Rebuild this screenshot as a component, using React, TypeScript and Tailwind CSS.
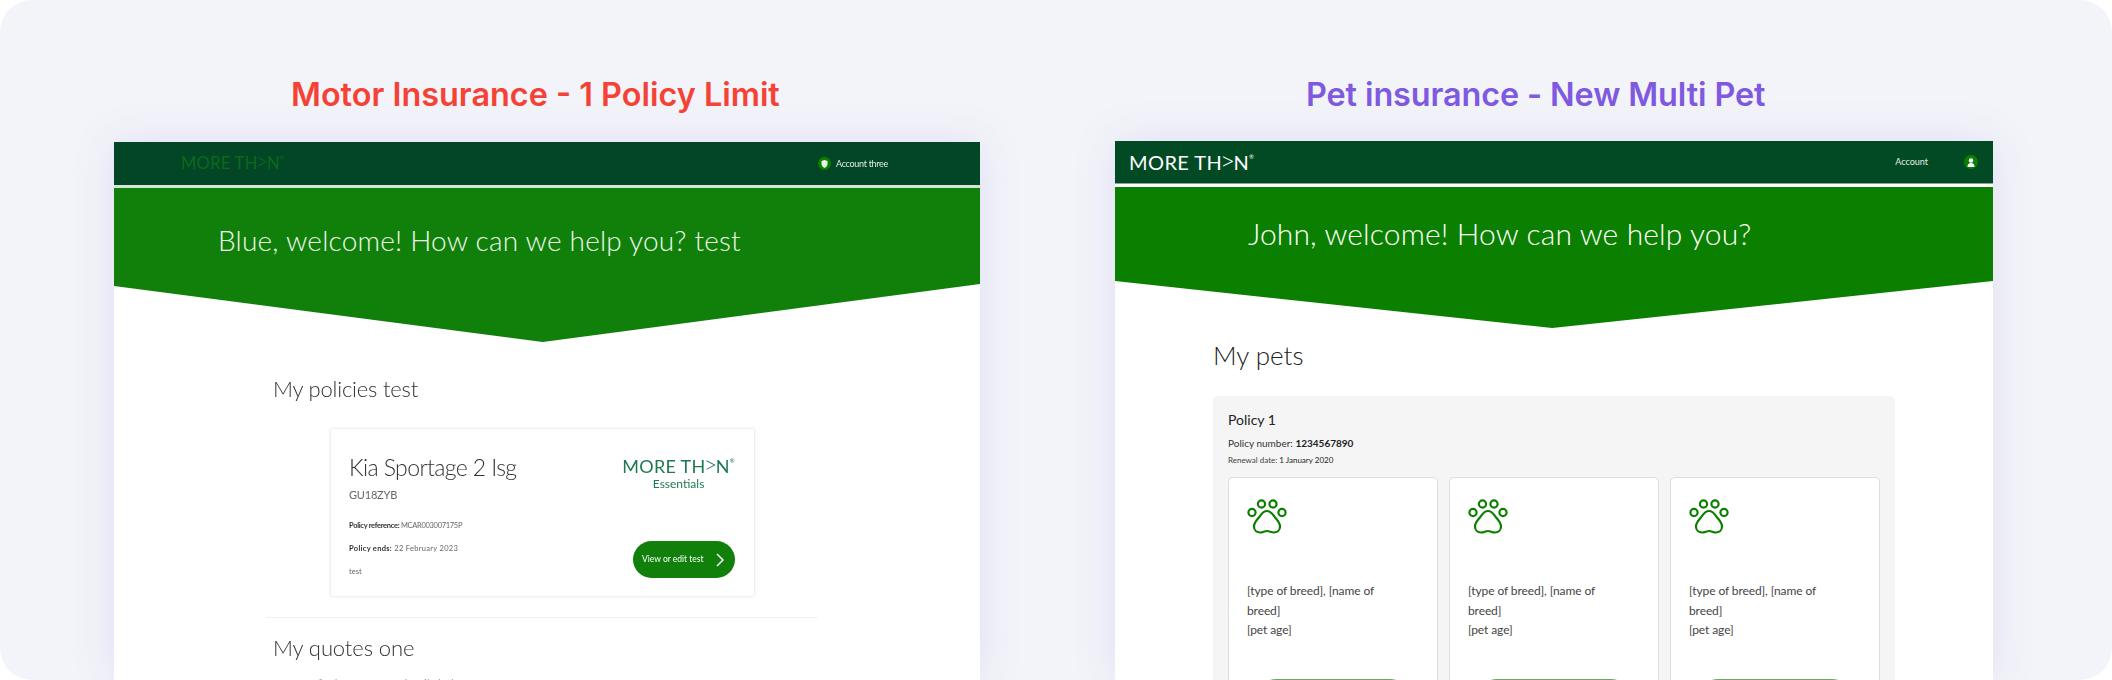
function Logo({ className }: { className: string }) {
  return (
    <span className={`inline-block whitespace-nowrap font-['Lato',sans-serif] font-normal ${className}`}>
      MORE TH<span className="text-[1.3em] leading-[0] font-light mx-[-0.08em]">&gt;</span>N
      <sup className="text-[6px] align-super">®</sup>
    </span>
  )
}

function PawIcon() {
  return (
    <svg width="40" height="35" viewBox="0 0 40 35" fill="none" stroke="#0b8000" strokeWidth="2.2">
      <circle cx="14.500" cy="5" r="3.600" />
      <circle cx="26" cy="5" r="3.600" />
      <circle cx="5" cy="13.500" r="3.600" />
      <circle cx="35" cy="13.500" r="3.600" />
      <path d="M20 12C15.500 12 14 16 11.500 19C9 22 7 24 7 27.500C7 31.500 10 33.500 13 33.500C16 33.500 17.500 32 20 32C22.500 32 24 33.500 27 33.500C30 33.500 33 31.500 33 27.500C33 24 31 22 28.500 19C26 16 24.500 12 20 12Z" />
    </svg>
  )
}

function PetCard() {
  return (
    <div className="flex-1 h-[300px] bg-white border border-[#dedede] rounded-[5px] pt-[21px] px-[18px]">
      <PawIcon />
      <p className="mt-[47px] text-[12px] leading-[19.700px] text-[#444] w-[130px] tracking-[-0.1px]">
        [type of breed], [name of breed]
        <br />
        [pet age]
      </p>
      <div className="mt-[39px] mx-[9px] h-[40px] rounded-[20px] bg-[#6aa864]" />
    </div>
  )
}

function MotorScreen() {
  return (
    <div className="w-[866px] h-[538px] bg-white overflow-hidden blur-[0.35px] shadow-[0_0_40px_rgba(120,120,220,0.16)]">
      {/* nav */}
      <div className="h-[43px] bg-[#024626] flex items-center pl-[67px] pr-[92px] justify-between">
        <Logo className="text-[16.500px] tracking-[0.3px] text-[#0c6a1a]" />
        <div className="flex items-center gap-[5px]">
          <span className="w-[13px] h-[13px] rounded-full bg-[#0b8000] flex items-center justify-center">
            <svg width="7" height="8" viewBox="0 0 7 8" fill="#e9f5e4"><path d="M0.500 1L3.500 0L6.500 1V4C6.500 6 5 7.300 3.500 8C2 7.300 0.500 6 0.500 4Z" /></svg>
          </span>
          <span className="text-[9px] tracking-[-0.3px] text-[#dceee0]">Account three</span>
        </div>
      </div>
      <div className="h-[3px] bg-[#d3e6d5]" />

      {/* hero */}
      <div className="h-[154px] bg-[#10800b] pl-[104px] pt-[32px] [clip-path:polygon(0_0,100%_0,100%_62.3%,49.5%_100%,0_63.6%)]">
        <h2 className="text-[28px] leading-[40px] font-light text-[#eef8ea] tracking-[0.2px]">Blue, welcome! How can we help you? test</h2>
      </div>

      <h3 className="ml-[159px] mt-[32px] text-[22px] leading-[30px] font-light text-[#333] tracking-[-0.2px]">My policies test</h3>

      {/* policy card */}
      <div className="ml-[216px] mt-[24px] w-[425px] h-[169px] border border-[#f0f0f0] rounded-[3px] shadow-[0_0_3px_rgba(0,0,0,0.08)] pl-[18px] pr-[19px] pt-[22px] flex justify-between">
        <div>
          <p className="text-[23px] leading-[32px] font-light text-[#333] tracking-[-0.6px]">Kia Sportage 2 Isg</p>
          <p className="text-[11px] leading-[16px] mt-[4px] text-[#666] tracking-[-0.2px]">GU18ZYB</p>
          <p className="text-[7.500px] leading-[14px] mt-[16px] text-[#666] tracking-[-0.3px]"><b className="text-[#333]">Policy reference:</b> MCAR003007175P</p>
          <p className="text-[7.500px] leading-[14px] mt-[9px] text-[#666] tracking-[0.3px]"><b className="text-[#333]">Policy ends:</b> 22 February 2023</p>
          <p className="text-[7.500px] leading-[14px] mt-[9px] text-[#666]">test</p>
        </div>
        <div className="flex flex-col items-end">
          <Logo className="text-[18px] leading-[22px] mt-[4px] tracking-[0.3px] text-[#1f7a52]" />
          <p className="self-center text-[12px] leading-[14px] text-[#1f7a52]">Essentials</p>
          <div className="mt-[50px] w-[102px] h-[37px] rounded-full bg-[#10800b] flex items-center justify-between pl-[9px] pr-[11px] text-white">
            <span className="text-[8.500px]">View or edit test</span>
            <svg width="8" height="14" viewBox="0 0 8 14" fill="none" stroke="currentColor" strokeWidth="1.500"><path d="M1 1l6 6-6 6" /></svg>
          </div>
        </div>
      </div>

      <div className="ml-[152px] mt-[20px] w-[552px] border-t border-[#f0f0f0]" />
      <h3 className="ml-[159px] mt-[15px] text-[22px] leading-[30px] font-light text-[#333] tracking-[-0.1px]">My quotes one</h3>
      <p className="ml-[159px] mt-[12px] text-[12px] text-[#aaa]">You can find your quote details below</p>
    </div>
  )
}

function PetScreen() {
  return (
    <div className="w-[878px] h-[539px] bg-white overflow-hidden shadow-[0_0_40px_rgba(120,120,220,0.16)]">
      {/* nav */}
      <div className="h-[43px] bg-[#024a24] border-b border-[#8fa398] flex items-center pl-[14px] pr-[15px] justify-between">
        <Logo className="text-[20px] tracking-[0.4px] text-white" />
        <div className="flex items-center gap-[36px]">
          <span className="text-[9px] text-[#e4efe6]">Account</span>
          <span className="w-[14px] h-[14px] rounded-full bg-[#0b8000] flex items-center justify-center">
            <svg width="8" height="9" viewBox="0 0 8 9" fill="white"><circle cx="4" cy="2.500" r="2.200" /><path d="M0.500 9c0-3 1.500-4 3.500-4s3.500 1 3.500 4z" /></svg>
          </span>
        </div>
      </div>
      <div className="h-[3px] bg-white" />

      {/* hero */}
      <div className="h-[141px] bg-[#0b8000] pl-[133px] pt-[26px] [clip-path:polygon(0_0,100%_0,100%_66.7%,49.8%_100%,0_66.7%)]">
        <h2 className="text-[30px] leading-[40px] font-light text-white tracking-[0.13px]">John, welcome! How can we help you?</h2>
      </div>

      <h3 className="ml-[98px] mt-[10px] text-[26px] leading-[34px] font-light text-[#222]">My pets</h3>

      {/* policy panel */}
      <div className="ml-[98px] mt-[24px] w-[682px] h-[400px] bg-[#f5f5f5] rounded-[5px] pt-[15px] px-[15px]">
        <p className="text-[14px] leading-[18px] text-[#222]">Policy 1</p>
        <p className="mt-[7px] text-[10px] leading-[14px] text-[#333]">Policy number: <b className="text-[#222]">1234567890</b></p>
        <p className="mt-[4px] text-[8px] leading-[12px] text-[#444]">Renewal date: <span className="text-[#222]">1 January 2020</span></p>
        <div className="mt-[11px] flex gap-[11px]">
          <PetCard />
          <PetCard />
          <PetCard />
        </div>
      </div>
    </div>
  )
}

export default function App() {
  return (
    <div className="w-[2112px] h-[680px] overflow-hidden bg-white font-['Lato','Noto_Sans',sans-serif]">
      <div className="h-full bg-[#f3f4f9] rounded-[32px] flex pl-[114px] gap-[135px]">
        <div className="flex flex-col">
          <h1 className="h-[142px] pt-[72px] pl-[177px] text-[32.400px] leading-[46px] font-semibold font-['Inter',sans-serif] text-[#f44336] whitespace-nowrap">Motor Insurance - 1 Policy Limit</h1>
          <MotorScreen />
        </div>
        <div className="flex flex-col">
          <h1 className="h-[141px] pt-[72px] pl-[191px] text-[32.400px] leading-[46px] font-semibold font-['Inter',sans-serif] text-[#7f5ae0] tracking-[-0.1px] whitespace-nowrap">Pet insurance - New Multi Pet</h1>
          <PetScreen />
        </div>
      </div>
    </div>
  )
}
